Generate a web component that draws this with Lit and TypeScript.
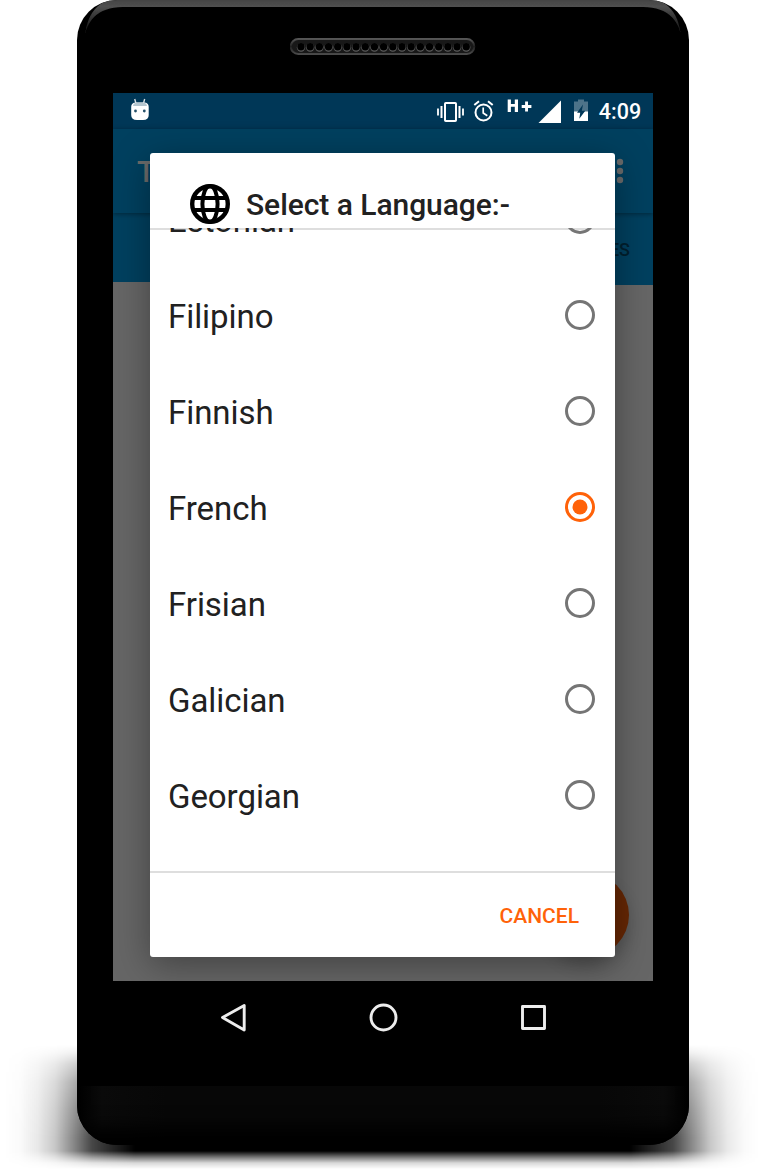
import { LitElement, html, css, svg } from "lit";
import { customElement, property, state } from "lit/decorators.js";

@customElement("radio-row")
class RadioRow extends LitElement {
  @property() label = "";
  @property({ type: Boolean }) checked = false;

  static styles = css`
    :host {
      display: flex;
      align-items: center;
      justify-content: space-between;
      height: 96px;
      padding: 0 18px;
      font-size: 33px;
      color: #212121;
      flex: none;
      box-sizing: border-box;
    }
    .label {
      line-height: 39px;
      padding-top: 2px;
      letter-spacing: -0.06px;
    }
    svg {
      display: block;
    }
  `;

  render() {
    const color = this.checked ? "#ff6209" : "#757575";
    return html`
      <span class="label">${this.label}</span>
      <svg width="34" height="34" viewBox="0 0 34 34">
        <circle cx="17" cy="17" r="13.5" fill="none" stroke=${color} stroke-width="3" />
        ${this.checked ? svg`<circle cx="17" cy="17" r="7.5" fill=${color} />` : null}
      </svg>
    `;
  }
}

@customElement("app-root")
class AppRoot extends LitElement {
  @state() selected = "French";

  languages = ["Estonian", "Filipino", "Finnish", "French", "Frisian", "Galician", "Georgian"];

  static styles = css`
    :host {
      display: block;
      position: relative;
      width: 765px;
      height: 1170px;
      overflow: hidden;
      background: #fff;
      font-family: Roboto, sans-serif;
    }
    .ground {
      position: absolute;
      left: 0;
      top: 1040px;
      width: 765px;
      height: 130px;
      background: linear-gradient(
        90deg,
        transparent 5px,
        rgba(0, 0, 0, 0.02) 20px,
        rgba(0, 0, 0, 0.09) 38px,
        rgba(0, 0, 0, 0.22) 55px,
        rgba(0, 0, 0, 0.46) 73px,
        rgba(0, 0, 0, 0.72) 92px,
        #000 135px,
        #000 630px,
        rgba(0, 0, 0, 0.72) 673px,
        rgba(0, 0, 0, 0.46) 692px,
        rgba(0, 0, 0, 0.22) 710px,
        rgba(0, 0, 0, 0.09) 727px,
        rgba(0, 0, 0, 0.02) 745px,
        transparent 760px
      );
      mask-image: linear-gradient(
        transparent 5px,
        rgba(0, 0, 0, 0.12) 13px,
        rgba(0, 0, 0, 0.38) 24px,
        rgba(0, 0, 0, 0.66) 42px,
        rgba(0, 0, 0, 0.85) 68px,
        #000 98px,
        #000 111px,
        rgba(0, 0, 0, 0.55) 117px,
        rgba(0, 0, 0, 0.15) 123px,
        transparent 129px
      );
    }
    .phone {
      position: relative;
      box-sizing: border-box;
      width: 612px;
      height: 1145px;
      margin-left: 77px;
      border-radius: 40px;
      background: #000;
      overflow: hidden;
      display: flex;
      flex-direction: column;
      align-items: center;
    }
    .rim {
      position: absolute;
      inset: 0;
    }
    .earpiece {
      height: 93px;
      padding-top: 38px;
      box-sizing: border-box;
      position: relative;
    }
    .chin {
      flex: 1;
      width: 612px;
      margin-top: 32px;
      background: linear-gradient(90deg, #000, #0a0a0a 25px, #070707 90px, #070707 522px, #0a0a0a 587px, #000);
      box-shadow: inset 0 -26px 18px -8px #000;
    }
    .screen {
      position: relative;
      width: 540px;
      height: 888px;
      background: #666;
      overflow: hidden;
      display: flex;
      flex-direction: column;
      flex: none;
    }
    .status {
      height: 36px;
      background: #003757;
      flex: none;
    }
    .status svg,
    .nav svg,
    .earpiece svg {
      display: block;
    }
    .status text {
      font: 500 21.5px Roboto, sans-serif;
      fill: #fff;
    }
    .toolbar {
      height: 84px;
      box-sizing: border-box;
      padding: 0 27px 0 24px;
      display: flex;
      align-items: center;
      justify-content: space-between;
      background: #00405f;
      color: #6b6b6b;
      font-size: 30px;
      font-weight: 500;
      box-shadow: 0 1px 5px rgba(0, 0, 0, 0.4);
      position: relative;
      flex: none;
    }
    .tabs {
      height: 72px;
      box-sizing: border-box;
      display: flex;
      justify-content: flex-end;
      align-items: center;
      padding: 1px 23px 0 0;
      background: linear-gradient(#00405f, #00405f) 0 0 / 50% 69px no-repeat,
        linear-gradient(#00405f, #00405f) 100% 0 / 50% 72px no-repeat;
      color: #001f2e;
      font-size: 18px;
      font-weight: 500;
      flex: none;
    }
    .fab {
      position: absolute;
      left: 432px;
      top: 780px;
      width: 84px;
      height: 84px;
      border-radius: 50%;
      background: #662704;
      box-shadow: 0 9px 16px rgba(0, 0, 0, 0.18);
    }
    .dialog {
      position: absolute;
      left: 37px;
      top: 60px;
      width: 465px;
      height: 804px;
      border-radius: 3px;
      background: #fff;
      box-shadow: 0 8px 36px rgba(0, 0, 0, 0.36);
      display: flex;
      flex-direction: column;
    }
    .title {
      height: 75px;
      box-sizing: border-box;
      display: flex;
      align-items: center;
      gap: 16px;
      padding: 27px 0 0 40px;
      font-size: 30px;
      font-weight: 500;
      letter-spacing: -0.05px;
      color: #212121;
      flex: none;
    }
    .title span {
      line-height: 36px;
      padding-top: 2px;
    }
    .title svg {
      display: block;
    }
    .list {
      height: 643px;
      box-sizing: border-box;
      overflow: hidden;
      background: linear-gradient(#dedede, #dedede) 0 0 / 100% 2px no-repeat;
    }
    .scrolled {
      display: flex;
      flex-direction: column;
      margin-top: -57px;
    }
    .actions {
      flex: 1;
      display: flex;
      align-items: center;
      justify-content: flex-end;
      padding: 2px 36px 0 0;
      border-top: 2px solid #dedede;
      color: #ff6209;
      font-size: 21px;
      font-weight: 500;
    }
    .nav {
      height: 73px;
      flex: none;
    }
  `;

  render() {
    return html`
      <div class="ground"></div>
      <div class="phone">
        <svg class="rim" width="612" height="60" viewBox="0 0 612 60">
          <defs>
            <linearGradient id="rimFade" x1="0" y1="0" x2="0" y2="40" gradientUnits="userSpaceOnUse">
              <stop offset="0" stop-color="#434343" />
              <stop offset="0.16" stop-color="#505050" />
              <stop offset="0.45" stop-color="#333" />
              <stop offset="1" stop-color="#000" />
            </linearGradient>
            <filter id="soft" x="-5%" y="-20%" width="110%" height="140%">
              <feGaussianBlur stdDeviation="0.5" />
            </filter>
          </defs>
          <path
            d="M7.5 42C8 22 20 7 46 7H566C592 7 604 22 604.5 42C604 22 596 -2 568 -2H44C16 -2 8 22 7.5 42Z"
            fill="url(#rimFade)"
            filter="url(#soft)"
          />
        </svg>
        <div class="earpiece">
          <svg width="186" height="18" viewBox="0 0 186 18">
            <defs>
              <linearGradient id="slot" x1="0" y1="0" x2="0" y2="1">
                <stop offset="0" stop-color="#555" />
                <stop offset="0.5" stop-color="#202020" />
                <stop offset="1" stop-color="#4a4a4a" />
              </linearGradient>
            </defs>
            <rect x="0.8" y="1" width="183.5" height="15" rx="7.5" fill="#181818" stroke="url(#slot)" stroke-width="2" />
            ${Array.from({ length: 19 }, (_, i) => {
              const x = 11 + i * 9.18;
              return svg`<circle cx=${x} cy="9.5" r="4.2" fill="#5c5c5c" /><circle cx=${x} cy="8.8" r="3.7" fill="#000" />`;
            })}
          </svg>
        </div>
        <div class="screen">
          <div class="status">
            <svg width="540" height="36" viewBox="0 0 540 36">
              <path d="M21.7 6L23 10.5M31.7 6L30.4 10.5" stroke="#d4dde2" stroke-width="1.4" />
              <path d="M18.2 14Q18.2 9.5 23 9.5H31Q35.7 9.5 35.7 14V22Q35.7 27 30 27H24Q18.2 27 18.2 22Z" fill="#fff" />
              <path d="M20 13Q20.5 9.5 24 9.5H30Q33.5 9.5 34 13Z" fill="#b5c6cf" />
              <circle cx="22.5" cy="18" r="1.4" fill="#26516a" />
              <circle cx="31.3" cy="18" r="1.4" fill="#26516a" />
              <g fill="none" stroke="#fff">
                <rect x="332" y="10" width="11" height="18" rx="0.8" stroke-width="2" />
                <path d="M328.5 13V25M346.5 13V25" stroke-width="2" />
                <path d="M325 15.5V22.5M350 15.5V22.5" stroke-width="1.8" />
                <circle cx="370.5" cy="19.5" r="8" stroke-width="2" />
                <path d="M370.2 14.5V20L374.3 22.8" stroke-width="1.7" />
                <path d="M361.3 12L366 8.2M375 8.2L379.7 12" stroke-width="2" />
              </g>
              <path
                d="M394.7 6.5H397.9V11H401.8V6.5H405V19H401.8V13.8H397.9V19H394.7ZM408.7 12H412.1V8.5H415V12H418.4V14.9H415V18.6H412.1V14.9H408.7Z"
                fill="#fff"
              />
              <path d="M448 7.5V30H425.5Z" fill="#fff" />
              <path d="M461 8.5H465V6.5H471V8.5H475V19H461Z" fill="#4d7389" />
              <path d="M461 18.5H475V28H461Z" fill="#fff" />
              <path d="M470 11.5L464 19.7H467.2L466.3 25.8L472.3 17.8H468.8Z" fill="#003757" />
              <text x="485.8" y="26">4:09</text>
            </svg>
          </div>
          <div class="toolbar">
            <span>T</span>
            <svg width="12" height="30" viewBox="0 0 12 30" fill="#6b6b6b">
              <circle cx="6" cy="6" r="3.2" />
              <circle cx="6" cy="15" r="3.2" />
              <circle cx="6" cy="24" r="3.2" />
            </svg>
          </div>
          <div class="tabs">ES</div>
          <div class="fab"></div>
          <div class="dialog">
            <div class="title">
              <svg width="40" height="40" viewBox="0 0 40 40" fill="none" stroke="#000" stroke-width="4">
                <circle cx="20" cy="20" r="17.8" stroke-width="4.4" />
                <ellipse cx="20" cy="20" rx="7.6" ry="18" />
                <path d="M4 14H36M4 26H36" />
              </svg>
              <span>Select a Language:-</span>
            </div>
            <div class="list">
              <div class="scrolled">
                ${this.languages.map(
                  (name) => html`<radio-row
                    .label=${name}
                    .checked=${name === this.selected}
                    @click=${() => (this.selected = name)}
                  ></radio-row>`
                )}
              </div>
            </div>
            <div class="actions">CANCEL</div>
          </div>
        </div>
        <div class="nav">
          <svg width="540" height="73" viewBox="0 0 540 73" fill="none" stroke="#ededed" stroke-width="2.9" stroke-linejoin="round">
            <path d="M109.5 36.5L131.2 24.5V49Z" />
            <circle cx="270.5" cy="36.5" r="12.5" />
            <rect x="409.5" y="25.5" width="22" height="22" />
          </svg>
        </div>
        <div class="chin"></div>
      </div>
    `;
  }
}
